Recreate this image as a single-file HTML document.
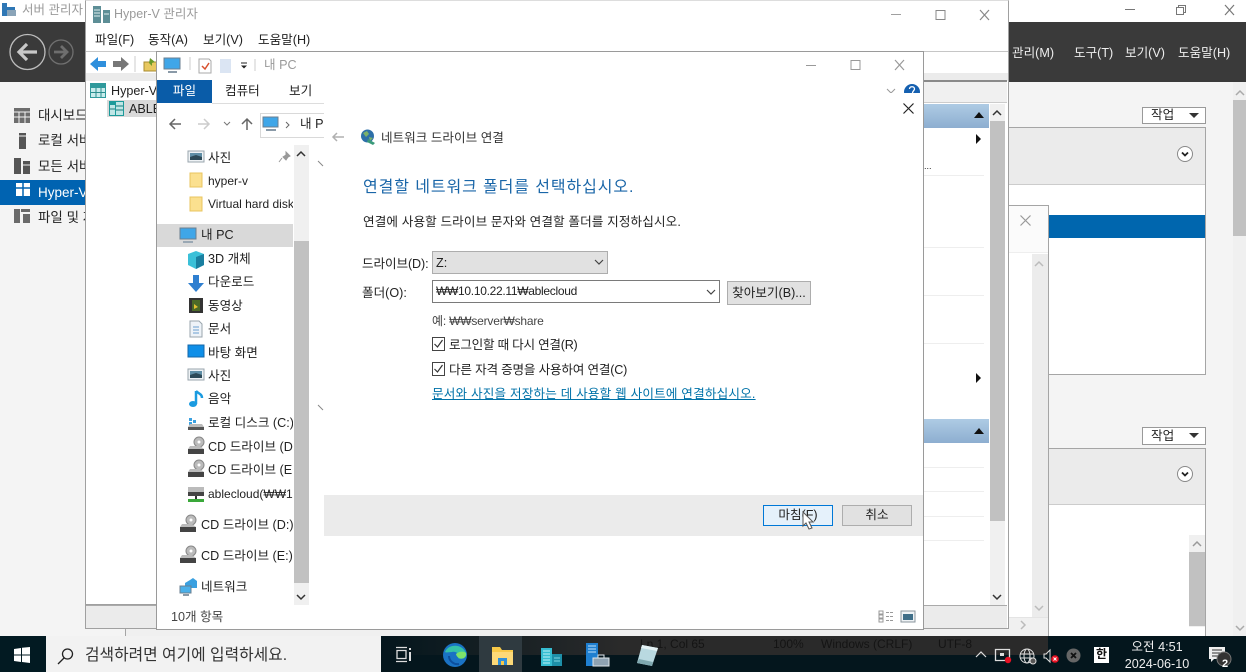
<!DOCTYPE html>
<html lang="ko"><head><meta charset="utf-8"><title>Hyper-V</title>
<style>
html,body{margin:0;padding:0}
body{width:1246px;height:672px;overflow:hidden;position:relative;background:#f4f4f4;font:12.6px/16px "Liberation Sans","Noto Sans CJK KR",sans-serif;color:#222}
div,span,svg,a{position:absolute;box-sizing:border-box}
.t{white-space:nowrap;height:16px;line-height:16px}
.g{color:#9a9a9a}
.clip{overflow:hidden}
svg{overflow:visible}
.sb{background:#f0f0f0}
.th{background:#c1c1c1}
.btn{background:#e1e1e1;border:1px solid #adadad;text-align:center;line-height:18px}
.ln{background:#eee;height:1px}
.l{font-size:12px}
</style></head><body>

<!-- SERVER MANAGER -->
<div style="left:0;top:0;width:1246px;height:22px;background:#fff"></div>
<svg style="left:1px;top:2px" width="16" height="16"><path d="M1 1h5v4h8v9H1z" fill="#2f77b5"/><path d="M6 8h9v6H6z" fill="#8aa4b8"/></svg>
<div class="t g" style="left:22px;top:2px;font-size:12.500px">서버 관리자</div>
<div style="left:0;top:22px;width:1246px;height:60px;background:#3a3a3a"></div>
<svg style="left:9px;top:33px" width="70" height="40" fill="none"><circle cx="18.500" cy="19" r="17.500" stroke="#bdbdbd" stroke-width="1.300"/><path d="M28 19H11M18 11l-8 8 8 8" stroke="#c8c8c8" stroke-width="3.200"/><circle cx="52" cy="19" r="12" stroke="#707070" stroke-width="1.300"/><path d="M45 19h12M52 13l6 6-6 6" stroke="#6e6e6e" stroke-width="2.800"/></svg>
<div class="t" style="left:1012px;top:45px;color:#eee">관리(M)</div>
<div class="t" style="left:1074px;top:45px;color:#eee">도구(T)</div>
<div class="t" style="left:1125px;top:45px;color:#eee">보기(V)</div>
<div class="t" style="left:1178px;top:45px;color:#eee">도움말(H)</div>
<svg style="left:1125px;top:2px" width="121" height="20" fill="none" stroke="#777"><path d="M0 7.500h10" /><path d="M51.500 5.500h7v7h-7zM53.500 5.500v-2h7v7h-2"/><path d="M100 3l9 10M109 3l-9 10" stroke-width="1.200"/></svg>
<!-- sidebar -->
<div style="left:0;top:180px;width:85px;height:25px;background:#0063b1"></div>
<svg style="left:14px;top:107px" width="18" height="120"><path d="M0 1h16v15H0z" fill="#6d6d6d"/><path d="M0 5h16M5 5v11M11 5v11M0 10h16" stroke="#f4f4f4"/><path d="M5 26h7v16H5z" fill="#555"/><path d="M5 29h7" stroke="#f4f4f4"/><path d="M0 51h7v16H0zM9 54h7v13H9z" fill="#555"/><path d="M9 58h7" stroke="#f4f4f4"/><path d="M2 76h14v13H2z" fill="#fff"/><path d="M9 76v13M2 81h14" stroke="#0063b1" stroke-width="1.500"/><path d="M0 102h6v14H0zM7 102h9v3H7zM9 107h7v9H9z" fill="#6a6a6a"/></svg>
<div class="t" style="left:38px;top:108px;font-size:13.500px">대시보드</div>
<div class="t" style="left:38px;top:133px;font-size:13.500px">로컬 서버</div>
<div class="t" style="left:38px;top:159px;font-size:13.500px">모든 서버</div>
<div class="t" style="left:38px;top:185px;font-size:13.500px;color:#fff">Hyper-V</div>
<div class="t" style="left:38px;top:210px;font-size:13.500px">파일 및 저장소</div>
<!-- right panels -->
<div class="btn" style="left:1142px;top:107px;width:64px;height:17px;background:#fff;border-color:#999;text-align:left;padding-left:8px;line-height:15px">작업</div>
<svg style="left:1189px;top:113px" width="10" height="6"><path d="M0 0h10L5 5z" fill="#333"/></svg>
<div style="left:1008px;top:127px;width:198px;height:248px;background:#fff;border:1px solid #a5a5a5"></div>
<div style="left:1008px;top:128px;width:197px;height:57px;background:#ebebeb;border-bottom:1px solid #ccc"></div>
<svg style="left:1177px;top:146px" width="16" height="16" fill="none"><circle cx="8" cy="8" r="7.500" stroke="#888" fill="#fff"/><path d="M5 6.500l3 3 3-3" stroke="#222" stroke-width="1.800"/></svg>
<div style="left:1008px;top:215px;width:197px;height:23px;background:#0066ae"></div>
<div class="btn" style="left:1142px;top:427px;width:64px;height:18px;background:#fff;border-color:#999;text-align:left;padding-left:8px;line-height:16px">작업</div>
<svg style="left:1189px;top:433px" width="10" height="6"><path d="M0 0h10L5 5z" fill="#333"/></svg>
<div style="left:1008px;top:448px;width:198px;height:190px;background:#fff;border:1px solid #a5a5a5"></div>
<div style="left:1008px;top:449px;width:197px;height:56px;background:#ebebeb;border-bottom:1px solid #ccc"></div>
<svg style="left:1177px;top:466px" width="16" height="16" fill="none"><circle cx="8" cy="8" r="7.500" stroke="#888" fill="#fff"/><path d="M5 6.500l3 3 3-3" stroke="#222" stroke-width="1.800"/></svg>
<div class="sb" style="left:1189px;top:535px;width:16px;height:92px"></div>
<div class="th" style="left:1189px;top:552px;width:16px;height:74px"></div>
<svg style="left:1192px;top:541px" width="10" height="6" fill="none"><path d="M1 5l4-4 4 4" stroke="#999" stroke-width="1.500"/></svg>
<!-- main scrollbar -->
<div class="sb" style="left:1233px;top:82px;width:13px;height:554px"></div>
<div class="th" style="left:1233px;top:100px;width:13px;height:136px"></div>
<svg style="left:1235px;top:90px" width="10" height="6" fill="none"><path d="M1 5l4-4 4 4" stroke="#aaa" stroke-width="1.500"/></svg>
<svg style="left:1235px;top:625px" width="10" height="6" fill="none"><path d="M1 1l4 4 4-4" stroke="#aaa" stroke-width="1.500"/></svg>
<!-- small window behind -->
<div style="left:125px;top:205px;width:924px;height:432px;background:#fff;border:1px solid #a5a5a5;border-bottom:0"></div>
<div style="left:1008px;top:206px;width:40px;height:47px;background:#fbfbfb;border-bottom:1px solid #eee"></div>
<div style="left:1032px;top:254px;width:16px;height:363px;background:#ececec"></div>
<svg style="left:1034px;top:261px" width="10" height="6" fill="none"><path d="M1 5l4-4 4 4" stroke="#bbb" stroke-width="1.500"/></svg>
<div style="left:126px;top:617px;width:922px;height:19px;background:#f0f0f0;border-top:1px solid #e4e4e4"></div>
<svg style="left:1020px;top:215px" width="11" height="11"><path d="M.5.500l10 10M10.500.500l-10 10" stroke="#999" stroke-width="1.200"/></svg>
<svg style="left:1034px;top:605px" width="10" height="6" fill="none"><path d="M1 1l4 4 4-4" stroke="#bbb" stroke-width="1.500"/></svg>
<svg style="left:1020px;top:620px" width="6" height="10" fill="none"><path d="M1 1l4 4-4 4" stroke="#bbb" stroke-width="1.500"/></svg>

<!-- HYPER-V WINDOW -->
<div style="left:85px;top:0;width:924px;height:629px;background:#fff;border:1px solid #a0a0a0;border-top:1px solid #ddd"></div>
<svg style="left:93px;top:6px" width="20" height="18"><path d="M0 0h8v17H0z" fill="#5d8e96"/><path d="M10 4h7v13h-7z" fill="#5d8e96"/><path d="M1 4h6M1 7h6M1 10h6M11 8h5" stroke="#dfeeee"/></svg>
<div class="t g" style="left:114px;top:6px;font-size:12.500px">Hyper-V 관리자</div>
<svg style="left:891px;top:8px" width="104" height="14" fill="none" stroke="#a0a0a0"><path d="M0 6.500h10"/><path d="M45 2.500h9v9h-9z" stroke="#888"/><path d="M89 2l9 10M98 2l-9 10" stroke-width="1.200" stroke="#888"/></svg>
<div class="t" style="left:95px;top:32px">파일(F)</div>
<div class="t" style="left:148px;top:32px">동작(A)</div>
<div class="t" style="left:203px;top:32px">보기(V)</div>
<div class="t" style="left:258px;top:32px">도움말(H)</div>
<svg style="left:90px;top:56px" width="70" height="16"><path d="M0 8l8-7v4h8v6H8v4z" fill="#2f8fdc"/><path d="M39 8l-8-7v4h-8v6h8v4z" fill="#777"/><path d="M45 0v16" stroke="#ccc"/><path d="M54 6h13v9H54z" fill="#e8c860" stroke="#a98b30"/><path d="M60 2l5 4-3 1v3l-3-3z" fill="#6a9a2a"/></svg>
<div style="left:86px;top:51px;width:922px;height:1px;background:#a0a0a0;opacity:.6"></div>
<div style="left:86px;top:73px;width:922px;height:8px;background:#ebebeb"></div>
<div style="left:924px;top:80px;width:83px;height:2px;background:#8a8a8a"></div>
<div style="left:924px;top:82px;width:83px;height:21px;background:#f0f0f0;border-bottom:1px solid #ccc"></div>
<div style="left:86px;top:81px;width:70px;height:524px;background:#fff;border-bottom:1px solid #a0a0a0"></div>
<div style="left:86px;top:605px;width:921px;height:23px;background:#ebebeb;border-top:1px solid #aaa"></div>
<svg style="left:90px;top:83px" width="50" height="34"><path d="M0 0h16v15H0z" fill="#2f9a9c"/><path d="M1 5h14v9H1z" fill="#c9ecec"/><path d="M1 9.500h14M6 5v9M11 5v9" stroke="#2b8d8d"/></svg>
<div class="t" style="left:111px;top:83px">Hyper-V</div>
<div style="left:107px;top:100px;width:49px;height:17px;background:#d9d9d9"></div>
<svg style="left:109px;top:101px" width="16" height="15"><path d="M0 0h15v15H0z" fill="#1c9a9a"/><path d="M7 1h7v13H7zM1 4h5v10H1z" fill="#bfe6e6"/><path d="M7 5h7M7 9h7M1 8h5" stroke="#17797a"/></svg>
<div class="t" style="left:129px;top:101px">ABLE</div>
<!-- actions pane visible part -->
<div style="left:924px;top:104px;width:65px;height:24px;background:linear-gradient(#aecbe4,#8daed0)"></div>
<div style="left:924px;top:419px;width:65px;height:24px;background:linear-gradient(#aecbe4,#8daed0)"></div>
<svg style="left:974px;top:112px" width="10" height="6"><path d="M0 6h10L5 0z" fill="#111"/></svg>
<svg style="left:974px;top:428px" width="10" height="6"><path d="M0 6h10L5 0z" fill="#111"/></svg>
<svg style="left:976px;top:134px" width="6" height="10"><path d="M0 0v10l5-5z" fill="#111"/></svg>
<svg style="left:976px;top:373px" width="6" height="10"><path d="M0 0v10l5-5z" fill="#111"/></svg>
<div class="t" style="left:924px;top:158px;font-size:9px">...</div>
<div class="ln" style="left:924px;top:175px;width:60px"></div>
<div class="ln" style="left:924px;top:247px;width:60px"></div>
<div class="ln" style="left:924px;top:295px;width:60px"></div>
<div class="ln" style="left:924px;top:343px;width:60px"></div>
<div class="ln" style="left:924px;top:467px;width:60px"></div>
<div class="ln" style="left:924px;top:491px;width:60px"></div>
<div class="ln" style="left:924px;top:516px;width:60px"></div>
<div class="ln" style="left:924px;top:540px;width:60px"></div>
<div class="sb" style="left:990px;top:104px;width:15px;height:501px"></div>
<div class="th" style="left:990px;top:121px;width:15px;height:400px"></div>
<svg style="left:992px;top:110px" width="10" height="6" fill="none"><path d="M1 5l4-4 4 4" stroke="#333" stroke-width="1.500"/></svg>
<svg style="left:992px;top:594px" width="10" height="6" fill="none"><path d="M1 1l4 4 4-4" stroke="#333" stroke-width="1.500"/></svg>

<!-- EXPLORER WINDOW -->
<div style="left:156px;top:51px;width:768px;height:579px;background:#fff;border:1px solid #9a9a9a"></div>
<svg style="left:164px;top:57px" width="90" height="18" fill="none"><path d="M0 1h16v11H0z" fill="#3fa6e8" stroke="#6b7f90"/><path d="M4 15h9" stroke="#8a9aa8" stroke-width="2"/><path d="M26 0v13" stroke="#ccc"/><path d="M35 2h10l2 2v12H35z" fill="#fff" stroke="#aaa"/><path d="M38 9l3 3 4-6" stroke="#d9502e" stroke-width="1.500"/><path d="M56 2h11v14H56z" fill="#dbe5f3"/><path d="M77 6h6" stroke="#222"/><path d="M77 8.500h6l-3 3z" fill="#222"/><path d="M91 2v12" stroke="#ccc"/></svg>
<div class="t g" style="left:264px;top:57px">내 PC</div>
<svg style="left:806px;top:59px" width="100" height="13" fill="none" stroke="#999"><path d="M0 6.500h10"/><path d="M45 1.500h9v9h-9z"/><path d="M89 1l9 10M98 1l-9 10" stroke-width="1.200"/></svg>
<div style="left:157px;top:80px;width:55px;height:23px;background:#0a5ca8;color:#fff;text-align:center;line-height:22px">파일</div>
<div class="t" style="left:225px;top:83px">컴퓨터</div>
<div class="t" style="left:289px;top:83px">보기</div>
<div style="left:212px;top:103px;width:112px;height:1px;background:#ddd"></div>
<svg style="left:886px;top:89px" width="10" height="5" fill="none"><path d="M1 0l4 4 4-4" stroke="#999"/></svg>
<div style="left:904px;top:84px;width:16px;height:16px;border-radius:8px;background:#1560b0"></div>
<svg style="left:909px;top:86px" width="7" height="8" fill="none"><path d="M.5 3c0-3 5-3 5 0 0 1.500-2 2-2 4" stroke="#fff" stroke-width="1.300"/></svg>
<svg style="left:168px;top:117px" width="88" height="14" fill="none"><path d="M13 7H2M7 2L2 7l5 5" stroke="#666" stroke-width="1.500"/><path d="M30 7h11M36 2l5 5-5 5" stroke="#ccc" stroke-width="1.500"/><path d="M56 5l3 3 3-3" stroke="#777"/><path d="M79 13V2M74 7l5-5 5 5" stroke="#666" stroke-width="1.500"/></svg>
<div style="left:260px;top:113px;width:70px;height:25px;border:1px solid #d9d9d9"></div>
<svg style="left:263px;top:116px" width="34" height="18" fill="none"><path d="M0 1h15v10H0z" fill="#3fa6e8" stroke="#6b7f90"/><path d="M3 14h10" stroke="#8a9aa8" stroke-width="2"/><path d="M23 6l3 3-3 3" stroke="#666"/></svg>
<div class="t clip" style="left:300px;top:116px;width:24px">내 PC</div>
<!-- nav pane -->
<div style="left:157px;top:224px;width:136px;height:23px;background:#d9d9d9"></div>
<div class="sb" style="left:294px;top:145px;width:15px;height:460px"></div>
<div class="th" style="left:294px;top:241px;width:15px;height:342px"></div>
<svg style="left:296px;top:151px" width="10" height="6" fill="none"><path d="M1 5l4-4 4 4" stroke="#333" stroke-width="1.500"/></svg>
<svg style="left:296px;top:594px" width="10" height="6" fill="none"><path d="M1 1l4 4 4-4" stroke="#333" stroke-width="1.500"/></svg>
<svg style="left:279px;top:152px" width="11" height="11"><path d="M7 0l4 4-2 1-2 3-3-3 3-2zM3 6l-3 4" fill="#999" stroke="#999"/></svg>
<svg style="left:157px;top:145px" width="140" height="455">
<g id="pic"><path d="M31 6h16v11H31z" fill="#eef2f5" stroke="#9aa5ad"/><path d="M33 8h12v7H33z" fill="#5f8ea6"/><path d="M33 12l6-2 6 2v3H33z" fill="#2d4a58"/></g>
<path d="M33 28h12v14H33z" fill="#fbe08f" stroke="#e8c55f"/><path d="M33 52h12v14H33z" fill="#fbe08f" stroke="#e8c55f"/>
<path d="M23 83h16v11H23z" fill="#3fa6e8" stroke="#6b7f90"/><path d="M26 97h10" stroke="#9aa8b4" stroke-width="2"/>
<path d="M31 109l8-3 8 3v11l-8 4-8-4z" fill="#3bc0d8"/><path d="M39 112l8-3v11l-8 4z" fill="#1a7fa0"/>
<path d="M36 130h6v8h5l-8 9-8-9h5z" fill="#2f7fd0"/>
<path d="M32 153h14v15H32z" fill="#333"/><path d="M35 155h8v11h-8z" fill="#4c6a28"/><path d="M37 159l4 3-4 2z" fill="#e4c030"/>
<path d="M33 176h9l3 3v13H33z" fill="#eef3f8" stroke="#9aa5ad"/><path d="M36 182h6M36 185h6M36 188h6" stroke="#6a9fd0"/>
<path d="M31 200h16v12H31z" fill="#0f8fe8" stroke="#1467a8"/>
<use href="#pic" y="218"/>
<path d="M39 246v13M39 246c3 3 6 3 6 7" stroke="#1a9be0" stroke-width="2.500" fill="none"/><ellipse cx="36" cy="259" rx="4" ry="3" fill="#1a9be0"/>
<path d="M32 273h3v3h-3zM36 275h3v3h-3zM32 277h3v3h-3z" fill="#3aa0e0"/><path d="M31 282h16v3H31z" fill="#555"/><path d="M33 279h12l2 3H31z" fill="#bbb"/>
<g id="cd"><circle cx="42" cy="297" r="5" fill="#bbb" stroke="#888"/><circle cx="42" cy="297" r="1.500" fill="#fff"/><path d="M31 304h16v5H31z" fill="#444"/><path d="M33 301h10l4 3H31z" fill="#bbb"/></g>
<use href="#cd" y="23"/>
<path d="M31 342h16v5H31z" fill="#bbb"/><path d="M31 347h16v4H31z" fill="#444"/><path d="M38 351h2v3h-2z" fill="#333"/><path d="M31 354h16v3H31z" fill="#3aa83a"/>
<use href="#cd" x="-8" y="78"/><use href="#cd" x="-8" y="109"/>
<path d="M28 438l5-3 3-2 4 3v7H28z" fill="#3aa0e0"/><path d="M23 441h11v7H23z" fill="#4ab0ea" stroke="#6b7f90"/><path d="M26 450h6" stroke="#8a9aa8" stroke-width="2"/>
</svg>
<div class="clip" style="left:157px;top:145px;width:136px;height:460px">
<span class="t" style="left:51px;top:5px">사진</span>
<span class="t l" style="left:51px;top:28px">hyper-v</span>
<span class="t l" style="left:51px;top:51px">Virtual hard disks</span>
<span class="t" style="left:44px;top:82px">내 PC</span>
<span class="t" style="left:51px;top:106px">3D 개체</span>
<span class="t" style="left:51px;top:129px">다운로드</span>
<span class="t" style="left:51px;top:153px">동영상</span>
<span class="t" style="left:51px;top:176px">문서</span>
<span class="t" style="left:51px;top:200px">바탕 화면</span>
<span class="t" style="left:51px;top:223px">사진</span>
<span class="t" style="left:51px;top:246px">음악</span>
<span class="t" style="left:51px;top:270px">로컬 디스크 (C:)</span>
<span class="t" style="left:51px;top:294px">CD 드라이브 (D:)</span>
<span class="t" style="left:51px;top:317px">CD 드라이브 (E:)</span>
<span class="t l" style="left:51px;top:341px">ablecloud(₩₩10.10</span>
<span class="t" style="left:44px;top:372px">CD 드라이브 (D:)</span>
<span class="t" style="left:44px;top:403px">CD 드라이브 (E:)</span>
<span class="t" style="left:44px;top:434px">네트워크</span>
</div>
<div class="t" style="left:171px;top:609px;color:#444">10개 항목</div>
<svg style="left:878px;top:610px" width="38" height="13"><path d="M1 1h4v3H1zM1 5h4v3H1zM1 9h4v3H1z" fill="none" stroke="#999"/><path d="M8 2.500h7M8 6.500h7M8 10.500h7" stroke="#999" stroke-dasharray="3 1"/><path d="M23 1h14v11H23z" fill="#eef2f5" stroke="#8a949c"/><path d="M25 4h10v6H25z" fill="#3f6e88"/></svg>
<svg style="left:317px;top:160px" width="8" height="255" fill="none" stroke="#888"><path d="M1 1l5 5M1 245l5 5"/></svg>

<!-- DIALOG -->
<div style="left:324px;top:93px;width:599px;height:402px;background:#fff"></div>
<div style="left:324px;top:495px;width:599px;height:41px;background:#ebebeb"></div>
<svg style="left:903px;top:103px" width="11" height="11"><path d="M.5.500l10 10M10.500.500l-10 10" stroke="#222" stroke-width="1.200"/></svg>
<svg style="left:332px;top:132px" width="13" height="10" fill="none"><path d="M12 5H1M5 1L1 5l4 4" stroke="#b0b0b0" stroke-width="1.500"/></svg>
<svg style="left:360px;top:129px" width="17" height="16"><circle cx="7.500" cy="7" r="6.500" fill="#2d6fa8"/><path d="M3 4l4-2 2 3-3 3zM9 8l4 1-3 3z" fill="#7bb06a"/><path d="M8 10l7 4-2 2-6-3z" fill="#3a9a7a"/></svg>
<div class="t" style="left:381px;top:130px;color:#333">네트워크 드라이브 연결</div>
<div class="t" style="left:363px;top:178px;font-size:16px;letter-spacing:.9px;height:20px;line-height:20px;color:#1a66a8">연결할 네트워크 폴더를 선택하십시오.</div>
<div class="t" style="left:363px;top:214px;letter-spacing:.12px">연결에 사용할 드라이브 문자와 연결할 폴더를 지정하십시오.</div>
<div class="t" style="left:362px;top:256px;letter-spacing:-.1px">드라이브(D):</div>
<div style="left:432px;top:251px;width:176px;height:23px;background:#e1e1e1;border:1px solid #adadad"></div>
<div class="t" style="left:436px;top:255px">Z:</div>
<svg style="left:594px;top:259px" width="10" height="6" fill="none"><path d="M1 1l4 4 4-4" stroke="#444" stroke-width="1.200"/></svg>
<div class="t" style="left:362px;top:285px">폴더(O):</div>
<div style="left:432px;top:280px;width:288px;height:23px;background:#fff;border:1px solid #7a7a7a"></div>
<div class="t l" style="left:436px;top:283px;letter-spacing:-.3px">₩₩10.10.22.11₩ablecloud</div>
<svg style="left:706px;top:289px" width="10" height="6" fill="none"><path d="M1 1l4 4 4-4" stroke="#444" stroke-width="1.200"/></svg>
<div class="btn" style="left:727px;top:281px;width:84px;height:24px;line-height:22px">찾아보기(B)...</div>
<div class="t l" style="left:432px;top:313px;color:#444;letter-spacing:-.2px">예: ₩₩server₩share</div>
<svg style="left:432px;top:337px" width="13" height="40" fill="none"><path d="M.5.500h12v13H.5zM.5 25.500h12v13H.5z" stroke="#444" fill="#fff"/><path d="M2.500 7l3 3 5-7M2.500 32l3 3 5-7" stroke="#333" stroke-width="1.200"/></svg>
<div class="t" style="left:449px;top:337px;letter-spacing:-.25px">로그인할 때 다시 연결(R)</div>
<div class="t" style="left:449px;top:362px;letter-spacing:-.2px">다른 자격 증명을 사용하여 연결(C)</div>
<div class="t" style="left:432px;top:386px;color:#0072a8;text-decoration:underline;letter-spacing:.18px">문서와 사진을 저장하는 데 사용할 웹 사이트에 연결하십시오.</div>
<div class="btn" style="left:763px;top:505px;width:70px;height:21px;background:#e5f1fb;border-color:#0078d7">마침(F)</div>
<div class="btn" style="left:842px;top:505px;width:70px;height:21px">취소</div>
<svg style="left:802px;top:511px" width="13" height="19"><path d="M1 1v14l3-3 3 6 3-1-3-6h4z" fill="#fff" stroke="#555"/></svg>

<!-- TASKBAR -->
<div style="left:0;top:636px;width:1246px;height:36px;background:#04161d"></div>
<div style="left:381px;top:636px;width:667px;height:19px;background:linear-gradient(90deg,#04161d 0,#2a2a2a 36%,#2a2a2a 100%)"></div>
<div class="t l" style="left:640px;top:636px;color:#141414">Ln 1, Col 65</div>
<div class="t l" style="left:773px;top:636px;color:#141414">100%</div>
<div class="t l" style="left:821px;top:636px;color:#141414">Windows (CRLF)</div>
<div class="t l" style="left:938px;top:636px;color:#141414">UTF-8</div>
<div style="left:0;top:636px;width:46px;height:36px;background:#021a22"></div>
<svg style="left:14px;top:647px" width="16" height="16"><path d="M0 2l7-1v6.500H0zM8 .800L16 0v7.500H8zM0 8.500h7V15l-7-1zM8 8.500h8V16l-8-1z" fill="#fff"/></svg>
<div style="left:46px;top:636px;width:335px;height:36px;background:#f2f2f2"></div>
<svg style="left:57px;top:648px" width="17" height="17" fill="none" stroke="#222" stroke-width="1.300"><circle cx="10.500" cy="6" r="5"/><path d="M7 10l-6 6"/></svg>
<div class="t" style="left:85px;top:647px;font-size:15.800px;height:18px;line-height:18px;color:#333">검색하려면 여기에 입력하세요.</div>
<div style="left:479px;top:636px;width:43px;height:36px;background:#2f3a40"></div>
<svg style="left:396px;top:647px" width="17" height="15" fill="none" stroke="#ddd" stroke-width="1.300"><path d="M1 3.500h9v8H1zM0 .500h11M0 14.500h11"/><path d="M14 1v2M14 5v9" stroke-width="2"/></svg>
<svg style="left:443px;top:643px" width="25" height="25"><circle cx="12" cy="12" r="12" fill="#1a72c4"/><path d="M2 9C5 1 19 0 23 10c1 5-5 7-8 5 2-4-2-7-6-6-3 0-6 1-7 0z" fill="#35c1a8"/><path d="M23 10c1 4-3 7-7 5-2-1-3-3-3-4 3-3 8-3 10-1z" fill="#7ee36a"/><path d="M6 13c0 5 5 9 10 8" stroke="#0c4f9e" stroke-width="2" fill="none"/></svg>
<svg style="left:492px;top:647px" width="21" height="18"><path d="M0 0h8l2 3h11v15H0z" fill="#f8c948"/><path d="M0 5h21v13H0z" fill="#fcd978"/><path d="M6 11h9v7H6z" fill="#2f8fd8"/><path d="M9 14h3v4H9z" fill="#f8c948"/></svg>
<svg style="left:540px;top:645px" width="23" height="22"><path d="M1 3h11v18H1z" fill="#35bcd0"/><path d="M12 9h10v12H12z" fill="#1d8fa8"/><path d="M3 6h7M3 9h7M3 12h7M3 15h7M3 18h7" stroke="#bff0f6"/><path d="M14 13h6M14 16h6" stroke="#7fd4e2"/></svg>
<svg style="left:586px;top:643px" width="24" height="24"><path d="M0 0h12v23H0z" fill="#1f7fd0"/><path d="M2 3h8M2 6h8M2 9h8" stroke="#bfe0fa"/><path d="M7 15h16v8H7z" fill="#8ea2b2" stroke="#dfe6ea"/><path d="M12 15v-3h6v3" stroke="#dfe6ea" fill="none"/></svg>
<svg style="left:635px;top:645px" width="23" height="22"><path d="M7 0l16 3-6 18-15-3z" fill="#b9d9e0"/><path d="M7 0l16 3-1 3-16-3z" fill="#e4f2f4"/><path d="M2 18l15 3 1-4-14-3z" fill="#7fa8b0"/></svg>
<svg style="left:975px;top:651px" width="12" height="7" fill="none"><path d="M1 6l5-5 5 5" stroke="#ddd" stroke-width="1.200"/></svg>
<svg style="left:995px;top:648px" width="18" height="18"><path d="M.5 1.500h14v11H.5z" fill="none" stroke="#ddd" stroke-width="1.300"/><path d="M5 5h4v3H5z" fill="#ddd"/><circle cx="13" cy="12" r="3.200" fill="#e81123"/></svg>
<svg style="left:1019px;top:648px" width="20" height="18" fill="none" stroke="#ddd"><circle cx="8" cy="8" r="7"/><ellipse cx="8" cy="8" rx="3" ry="7"/><path d="M1 6h14M1 10h14"/><circle cx="14" cy="13" r="3" fill="#555"/></svg>
<svg style="left:1043px;top:649px" width="18" height="16"><path d="M1 5h2l4-4v12l-4-4H1z" fill="none" stroke="#ddd"/><circle cx="12" cy="10" r="3.800" fill="#e81123"/><path d="M10.500 8.500l3 3M13.500 8.500l-3 3" stroke="#fff"/></svg>
<svg style="left:1066px;top:648px" width="15" height="15"><circle cx="7.500" cy="7.500" r="7" fill="#666"/><path d="M5 5l5 5M10 5l-5 5" stroke="#111" stroke-width="1.800"/></svg>
<div style="left:1094px;top:647px;width:15px;height:16px;background:#fff;color:#111;font-size:12px;line-height:15px;text-align:center;font-weight:bold">한</div>
<div class="t" style="left:1107px;top:639px;width:100px;text-align:center;color:#eee">오전 4:51</div>
<div class="t" style="left:1107px;top:656px;width:100px;text-align:center;color:#eee">2024-06-10</div>
<svg style="left:1209px;top:647px" width="26" height="22"><path d="M0 0h16v12H5l-3 3v-3H0z" fill="#eee"/><path d="M3 3h10M3 6h10M3 9h7" stroke="#333"/><circle cx="15" cy="12" r="7" fill="#333" stroke="#777"/></svg>
<div class="t" style="left:1220px;top:656px;width:10px;text-align:center;color:#fff;font-weight:bold;font-size:11px">2</div>
</body></html>
